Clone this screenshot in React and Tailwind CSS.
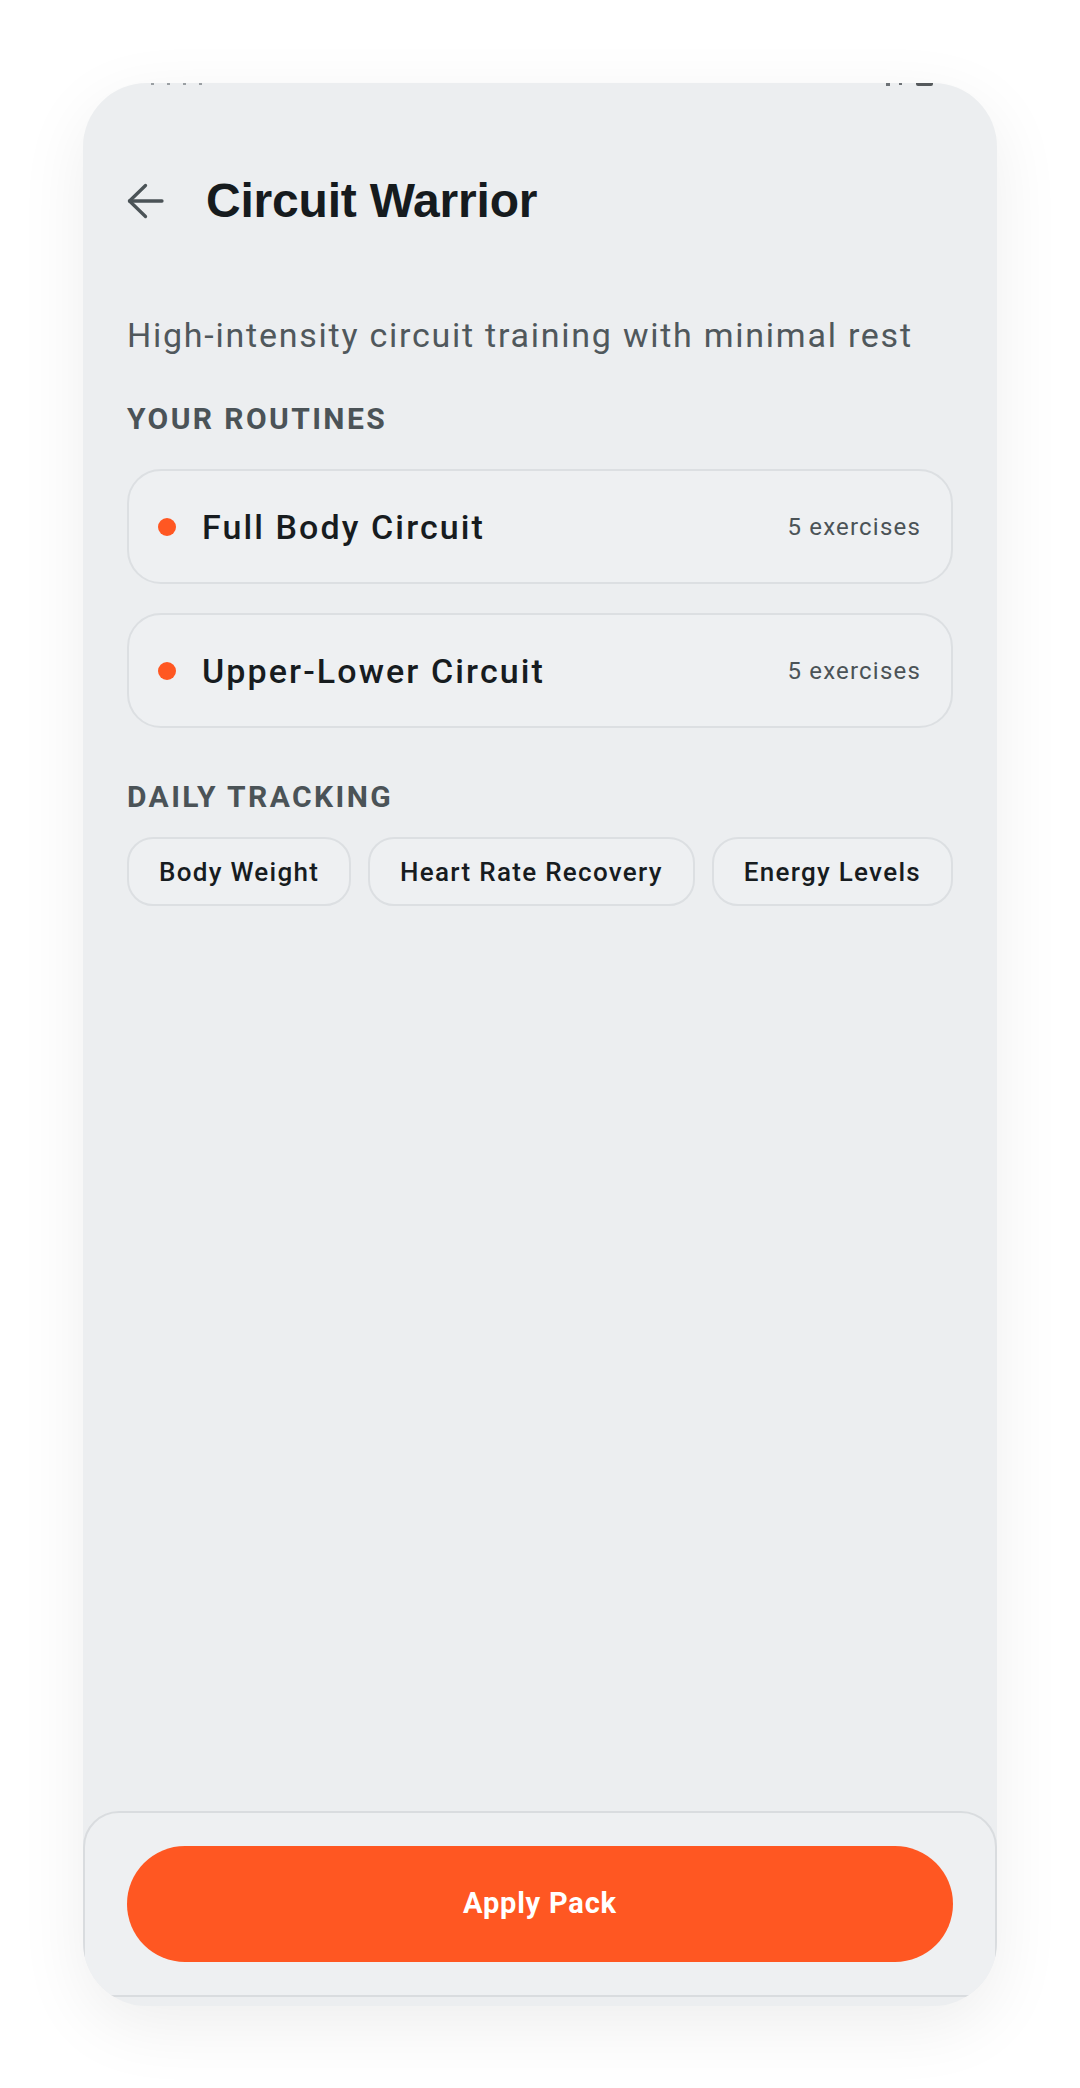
import React from "react";

function BackArrow() {
  return (
    <svg width="38" height="36" viewBox="0 0 38 36" fill="none" className="shrink-0">
      <path d="M18.5 2.5 L2.5 18 L18.5 33.5" stroke="#4b5357" strokeWidth="3.3" strokeLinecap="round" strokeLinejoin="round" />
      <path d="M2.5 18 H35" stroke="#4b5357" strokeWidth="3.3" strokeLinecap="round" />
    </svg>
  );
}

function RoutineCard({ name, count }) {
  return (
    <div className="flex h-[115px] items-center justify-between rounded-[34px] border-2 border-[#dcdfe2] bg-[#eef0f2] pl-[29px] pr-[30px]">
      <div className="flex items-center gap-[26px]">
        <span className="h-[18px] w-[18px] rounded-full bg-[#ff5722]" />
        <span className="text-[34px] font-medium leading-[40px] tracking-[2.1px] text-[#171c1f]">{name}</span>
      </div>
      <span className="text-[24px] leading-[30px] tracking-[1.2px] text-[#4b5357]">{count}</span>
    </div>
  );
}

function Chip({ label }) {
  return (
    <div className="flex h-[69px] items-center rounded-[26px] border-2 border-[#dcdfe2] bg-[#eef0f2] px-[30px]">
      <span className="text-[26px] font-medium leading-[32px] tracking-[1.3px] text-[#171c1f]">{label}</span>
    </div>
  );
}

export default function App() {
  return (
    <div className="min-h-[2088px] w-full bg-white pt-[83px] font-['Roboto',sans-serif]">
      <div className="relative mx-auto flex h-[1923px] w-[914px] flex-col overflow-hidden rounded-[64px] bg-[#eceef0] shadow-[0_20px_70px_rgba(0,0,0,0.07)]">
        {/* clipped status bar remnants */}
        <div className="absolute left-[68px] top-0 flex gap-[13px]">
          <span className="h-[2px] w-[3px] bg-[#9a9fa3]" />
          <span className="h-[2px] w-[3px] bg-[#9a9fa3]" />
          <span className="h-[2px] w-[3px] bg-[#9a9fa3]" />
          <span className="h-[2px] w-[3px] bg-[#9a9fa3]" />
        </div>
        <div className="absolute left-[803px] top-0 flex items-start gap-[9px]">
          <span className="h-[3px] w-[4px] bg-[#6d7276]" />
          <span className="h-[2px] w-[3px] bg-[#6d7276]" />
          <span className="ml-[5px] h-[3px] w-[17px] rounded-b-[2px] bg-[#55595c]" />
        </div>

        <div className="flex flex-col px-[44px] pt-[90px]">
          <div className="flex h-[56px] items-center gap-[41px]">
            <BackArrow />
            <h1 className="font-['Liberation_Sans',Arial,sans-serif] text-[48px] font-bold leading-[56px] tracking-[-0.2px] text-[#161b1e]">
              Circuit Warrior
            </h1>
          </div>

          <p className="mt-[86px] text-[34px] leading-[40px] tracking-[1.75px] text-[#50585c]">
            High-intensity circuit training with minimal rest
          </p>

          <h2 className="mt-[46px] text-[30px] font-bold leading-[36px] tracking-[2.4px] text-[#4b5357]">
            YOUR ROUTINES
          </h2>

          <div className="mt-[32px] flex flex-col gap-[29px]">
            <RoutineCard name="Full Body Circuit" count="5 exercises" />
            <RoutineCard name="Upper-Lower Circuit" count="5 exercises" />
          </div>

          <h2 className="mt-[51px] text-[30px] font-bold leading-[36px] tracking-[2.4px] text-[#4b5357]">
            DAILY TRACKING
          </h2>

          <div className="mt-[22px] flex justify-between">
            <Chip label="Body Weight" />
            <Chip label="Heart Rate Recovery" />
            <Chip label="Energy Levels" />
          </div>
        </div>

        <div className="mt-auto flex h-[186px] flex-col justify-center rounded-t-[36px] border-2 border-[#d9dcdf] bg-[#eef0f2] px-[42px]">
          <button className="flex h-[116px] w-full items-center justify-center rounded-full bg-[#ff5722] text-[29px] font-bold tracking-[0.8px] text-white">
            Apply Pack
          </button>
        </div>
        <div className="h-[9px] shrink-0" />
      </div>
    </div>
  );
}
